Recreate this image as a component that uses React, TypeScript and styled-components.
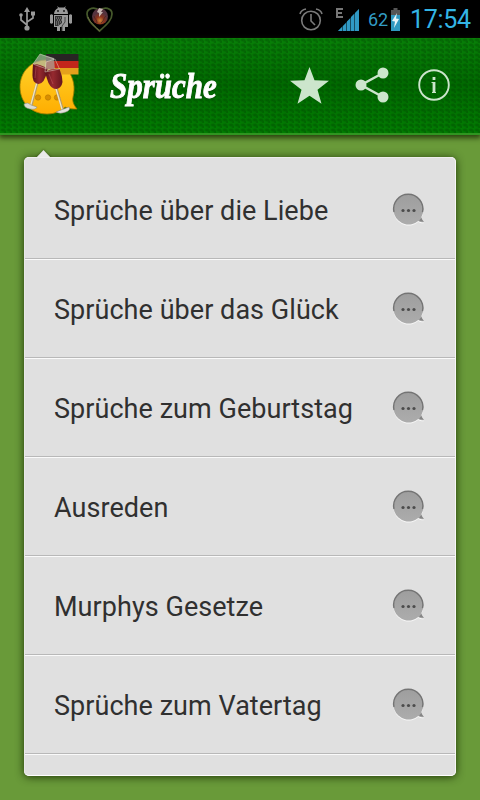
import React from "react";
import styled, { createGlobalStyle } from "styled-components";

const GlobalStyle = createGlobalStyle`
  * { box-sizing: border-box; }
  body { margin: 0; background: #699a39; font-family: Roboto, sans-serif; }
`;

const Screen = styled.div`
  width: 480px;
  height: 800px;
  overflow: hidden;
  display: flex;
  flex-direction: column;
  background: #699a39;
`;

const StatusBar = styled.div`
  flex: 0 0 38px;
  height: 38px;
  background: #000;
  display: flex;
  justify-content: space-between;
  padding: 0 9px 0 18px;
`;

const StatusGroup = styled.div`
  display: flex;
  align-items: center;
`;

const Notifications = styled(StatusGroup)`
  gap: 12px;
`;

const AlarmSlot = styled.span`
  display: flex;
  margin: 1px 12px 0 0;
`;

const BatteryLevel = styled.span`
  color: #329cc4;
  font-size: 18px;
  line-height: 30px;
  width: 21px;
  margin: 2px 2px 0 8px;
`;

const Clock = styled.span`
  color: #33b5e5;
  font-size: 25px;
  line-height: 30px;
  width: 61px;
  margin-left: 10px;
  margin-top: 1px;
  letter-spacing: -0.3px;
`;

const Header = styled.header`
  flex: 0 0 97px;
  display: flex;
  align-items: center;
  padding: 0 28px 1px 18px;
  border-bottom: 2px solid #2f9520;
  background-color: #026402;
  background-image:
    radial-gradient(ellipse 3px 2px at 3px 2px, rgba(0, 55, 0, 0.3) 0 45%, transparent 100%),
    radial-gradient(ellipse 3px 2px at 6px 4px, rgba(0, 55, 0, 0.3) 0 45%, transparent 100%),
    linear-gradient(#088008, #016a01 48%, #027c02);
  background-size: 6px 5px, 6px 5px, 100% 100%;
  box-shadow: 0 2px 5px 1px rgba(22, 38, 0, 0.75);
`;

const Title = styled.h1`
  margin: 2px 0 0 30px;
  width: 105px;
  color: #fff;
  font: italic 700 36px/44px "Liberation Serif", serif;
  white-space: nowrap;
  -webkit-text-stroke: 0.9px #fff;
  transform: scaleX(0.86);
  transform-origin: left center;
  text-shadow: 0 1px 2px rgba(0, 40, 0, 0.6);
`;

const Actions = styled.nav`
  display: flex;
  align-items: center;
  margin-left: auto;
`;

const ActionButton = styled.button`
  width: 62px;
  height: 48px;
  padding: 0;
  border: 0;
  background: none;
  display: flex;
  align-items: center;
  justify-content: center;
  &:last-child { width: 36px; margin-left: 13px; }
`;

const Content = styled.main`
  flex: 1;
  padding: 22px 24px 0;
`;

const Card = styled.section`
  position: relative;
  height: 619px;
  border-radius: 5px;
  background: #e0e0e0;
  box-shadow: 0 1px 8px rgba(20, 35, 0, 0.85);
`;

const Pointer = styled.svg`
  position: absolute;
  left: 10px;
  top: -8px;
  filter: drop-shadow(0 -1px 1px rgba(30, 50, 0, 0.4));
`;

const List = styled.ul`
  position: relative;
  list-style: none;
  margin: 0;
  padding: 3px 0 0;
  height: 619px;
  overflow: hidden;
  border-radius: 5px;
  background: #e0e0e0;
  border: 1px solid #f7f7f7;
  border-left-color: #e8e8e8;
  border-top-color: #eeeeee;
  border-bottom-color: #fff;
`;

const Row = styled.li`
  height: 99px;
  display: flex;
  align-items: center;
  justify-content: space-between;
  padding: 0 30px 0 29px;
  border-bottom: 1px solid #fafafa;
  box-shadow: inset 0 -1px 0 #b8b8b8;
`;

const Label = styled.span`
  margin-top: 2px;
  color: #303030;
  font-size: 27px;
  line-height: 34px;
  letter-spacing: 0.05px;
  white-space: nowrap;
`;

const UsbIcon = () => (
  <svg width="18" height="24" viewBox="0 0 18 24" fill="none" stroke="#999" strokeWidth="1.7">
    <path d="M9 20V4M9 18L3 13V8M9 15l6-4V6" />
    <path d="M9 0l3 5H6z" fill="#999" stroke="none" />
    <circle cx="9" cy="21" r="2.6" fill="#999" stroke="none" />
    <circle cx="3" cy="8" r="1.8" fill="#999" stroke="none" />
    <path d="M13 4.5h4v4h-4z" fill="#999" stroke="none" />
  </svg>
);

const AndroidIcon = () => (
  <svg width="26" height="26" viewBox="0 0 26 26" fill="#999">
    <path d="M6 8c0-3 2-5 4-6L9 0l2 1.5h5L18 0l-1 2c2 1 3 3 3 6zM2 9q1.500-1.500 3 0v8q-1.500 1.500-3 0zM21 9q1.500-1.500 3 0v8q-1.500 1.500-3 0zM6 9h14v12h-3v4h-3v-4h-2v4H9v-4H6z" />
    <path d="M7 10h7v7l-4 3H7z" fill="#333" />
    <path d="M8 12h5M9 14h5M8 16h5M8 18h3" stroke="#999" strokeDasharray="1 1" />
    <path d="M17 11v5l-3 4v5" stroke="#444" fill="none" />
    <circle cx="10" cy="5" r=".9" fill="#111" />
    <circle cx="16" cy="5" r=".9" fill="#111" />
  </svg>
);

const HeartIcon = () => (
  <svg width="27" height="27" viewBox="0 0 27 27">
    <defs>
      <radialGradient id="ember" cy=".75">
        <stop offset="0" stopColor="#c98436" />
        <stop offset=".5" stopColor="#8b321c" />
        <stop offset="1" stopColor="#55333f" />
      </radialGradient>
    </defs>
    <path d="M13.500 25C8 20 1 15 1 8c0-6 8-8 12.500-3C18 0 26 2 26 8c0 7-7 12-12.500 17z" fill="none" stroke="#46592b" strokeWidth="1.700" />
    <path d="M2 11c2 6 7 9 11.500 14" fill="none" stroke="#707044" />
    <circle cx="14" cy="10.500" r="8" fill="url(#ember)" />
    <path d="M8 10c1 4 3 3 3 7M20 10c-3 2-1 4-5 7" fill="none" stroke="#402421" strokeWidth="1" opacity=".7" />
    <path d="M13 2l4 1-2 3h2l-4 5v-4l-2-1z" fill="#c9b7b2" />
  </svg>
);

const AlarmIcon = () => (
  <svg width="24" height="23" viewBox="0 0 24 23" fill="none" stroke="#7b7b7b" strokeWidth="1.600">
    <circle cx="12" cy="12.500" r="9.300" />
    <path d="M12 6v7l4 4M1 6q1-4 6-5M17 1q5 1 6 5" />
  </svg>
);

const SignalIcon = () => (
  <svg width="25" height="25" viewBox="0 0 25 25">
    <path d="M8 2H2v8h6M2 6h5" fill="none" stroke="#777" strokeWidth="2" />
    <path d="M3 24L24 2v22z" fill="#174c61" />
    <path d="M3 24l4-4v4zM8 24v-5l3-3v8zM12 24V14.500l3-3V24zM16 24V10l3-3v17zM20 24V6l4-4v22z" fill="#3099c4" />
  </svg>
);

const BatteryIcon = () => (
  <svg width="9" height="23" viewBox="0 0 9 23">
    <path d="M2.500 0h4v2H9v5H0V2h2.500z" fill="#555" />
    <path d="M0 7h9v16H0z" fill="#3099c0" />
    <path d="M6 5L1 13l3 .5L3 20l5-9-3-.5z" fill="#e9f5f8" />
  </svg>
);

const LogoIcon = () => (
  <svg width="62" height="64" viewBox="0 0 62 64">
    <defs>
      <linearGradient id="bubble" y2="1" x2="0">
        <stop stopColor="#ffd42b" />
        <stop offset="1" stopColor="#ffad00" />
      </linearGradient>
      <linearGradient id="wine" x2="1">
        <stop stopColor="#5a1019" />
        <stop offset=".45" stopColor="#96292f" />
        <stop offset="1" stopColor="#64151d" />
      </linearGradient>
    </defs>
    <path d="M29 7C13 7 2 19 2 34s11 27 27 27c8 0 14-3 18-7 4 2 8 2 12 2-3-4-5-7-4-12C60 25 47 7 29 7z" fill="url(#bubble)" stroke="#a17b00" strokeWidth=".8" />
    <g fill="#d98f00" stroke="#b87800" strokeWidth=".6">
      <circle cx="20" cy="44.500" r="2.700" /><circle cx="30" cy="44.500" r="2.700" /><circle cx="39" cy="44.500" r="2.700" />
    </g>
    <path d="M28 1h32.500v8H28z" fill="#282424" />
    <path d="M28 8h32.500v8H28z" fill="#c3251b" />
    <path d="M36 15h24.500v6.500H36z" fill="#e4a11c" />
    <path d="M22 1l14 4 1 13-9 1-13-8z" fill="#a9aea0" opacity=".7" />
    <path d="M19.500 29l-6.500 24M38 34l7 24" stroke="#b39a68" strokeWidth="2.600" />
    <path d="M19 29l-6.500 24M37.500 34l7 24" stroke="#efe5c4" strokeWidth="1.300" />
    <path d="M15 11q8 0 14.500 5-1 7-4 12-3 4-7 2.500-4-2-4-8 0-6 .5-11.500z" fill="url(#wine)" />
    <path d="M27 19q7-4 14.500-3 3 7 3 13-1 6-6 7-5 0-8-6-2-5-3.500-11z" fill="url(#wine)" />
    <path d="M22 1l-7 10 14 5M22 1l14 5M28 9l-1 10 14.500-3L37 6z" stroke="#e4e2d0" strokeWidth=".8" opacity=".6" fill="none" />
    <path d="M18 14l-1 11M31 21l4 10" stroke="#cb666a" opacity=".4" />
    <path d="M6 51q4-2.500 7 1l6 2q-1 3-7 2-6-1-6-5z" fill="#dbdbd4" stroke="#858576" strokeWidth=".5" />
    <path d="M38 59l5-2 8-3q2 3-3 5-6 2.500-10 0z" fill="#e2e2dc" stroke="#858576" strokeWidth=".5" />
  </svg>
);

const StarIcon = () => (
  <svg width="40" height="37" viewBox="0 0 40 37">
    <path d="M19.500 0l5 13.200 14.500.5-11.500 9 4 14-12-8-12 8 4-14-11.500-9 14.500-.5z" fill="#cce5cc" />
  </svg>
);

const ShareIcon = () => (
  <svg width="34" height="36" viewBox="0 0 34 36" fill="#cce5cc">
    <path d="M28 6L6 18l22 12" fill="none" stroke="#cce5cc" strokeWidth="2.500" />
    <circle cx="6" cy="18" r="5.500" /><circle cx="28" cy="6" r="5.500" /><circle cx="28" cy="30" r="5.500" />
  </svg>
);

const InfoIcon = () => (
  <svg width="32" height="32" viewBox="0 0 32 32" fill="none" stroke="#cce5cc">
    <circle cx="16" cy="16" r="14.800" strokeWidth="1.900" />
    <path d="M13.500 13.500h2M14 23.500h4" strokeWidth="1" />
    <path d="M16 13v11M16 8v3" strokeWidth="2.800" />
  </svg>
);

const BubbleIcon = () => (
  <svg width="34" height="34" viewBox="0 0 34 34">
    <defs>
      <linearGradient id="chat" x2="0" y2="1">
        <stop stopColor="#9e9e9e" /><stop offset="1" stopColor="#acacac" />
      </linearGradient>
    </defs>
    <path d="M17.500 1.500a15 15 0 1 0 9.700 26.500c2 1.300 4 1.500 6 1-1.500-1.500-2.500-3-2.800-5A15 15 0 0 0 17.500 1.500z" transform="translate(0 1)" fill="#f7f7f7" />
    <path d="M17.500 1.500a15 15 0 1 0 9.700 26.500c2 1.300 4 1.500 6 1-1.500-1.500-2.500-3-2.800-5A15 15 0 0 0 17.500 1.500z" fill="url(#chat)" />
    <path d="M3 19A14.600 14.600 0 1 1 31.500 19" fill="none" stroke="#747474" strokeWidth="1.400" />
    <path d="M28 27.500q2.500 1.300 4.500 1-1.700-1.700-2-3.500" fill="#858585" />
    <circle cx="12" cy="17.500" r="1.600" fill="#4c4c4c" />
    <circle cx="17.500" cy="17.500" r="1.600" fill="#4c4c4c" />
    <circle cx="23" cy="17.500" r="1.600" fill="#4c4c4c" />
  </svg>
);

const categories = [
  "Sprüche über die Liebe",
  "Sprüche über das Glück",
  "Sprüche zum Geburtstag",
  "Ausreden",
  "Murphys Gesetze",
  "Sprüche zum Vatertag",
];

export default function App() {
  return (
    <Screen>
      <GlobalStyle />
      <StatusBar>
        <Notifications><UsbIcon /><AndroidIcon /><HeartIcon /></Notifications>
        <StatusGroup>
          <AlarmSlot><AlarmIcon /></AlarmSlot>
          <SignalIcon />
          <BatteryLevel>62</BatteryLevel>
          <BatteryIcon />
          <Clock>17:54</Clock>
        </StatusGroup>
      </StatusBar>
      <Header>
        <LogoIcon />
        <Title>Sprüche</Title>
        <Actions>
          <ActionButton aria-label="Favoriten"><StarIcon /></ActionButton>
          <ActionButton aria-label="Teilen"><ShareIcon /></ActionButton>
          <ActionButton aria-label="Info"><InfoIcon /></ActionButton>
        </Actions>
      </Header>
      <Content>
        <Card>
          <Pointer width="20" height="10" viewBox="0 0 20 10">
            <path d="M1 10L9.500 1 18 10z" fill="#e9e9e9" />
          </Pointer>
          <List>
            {categories.map((name) => (
              <Row key={name}>
                <Label>{name}</Label>
                <BubbleIcon />
              </Row>
            ))}
          </List>
        </Card>
      </Content>
    </Screen>
  );
}
